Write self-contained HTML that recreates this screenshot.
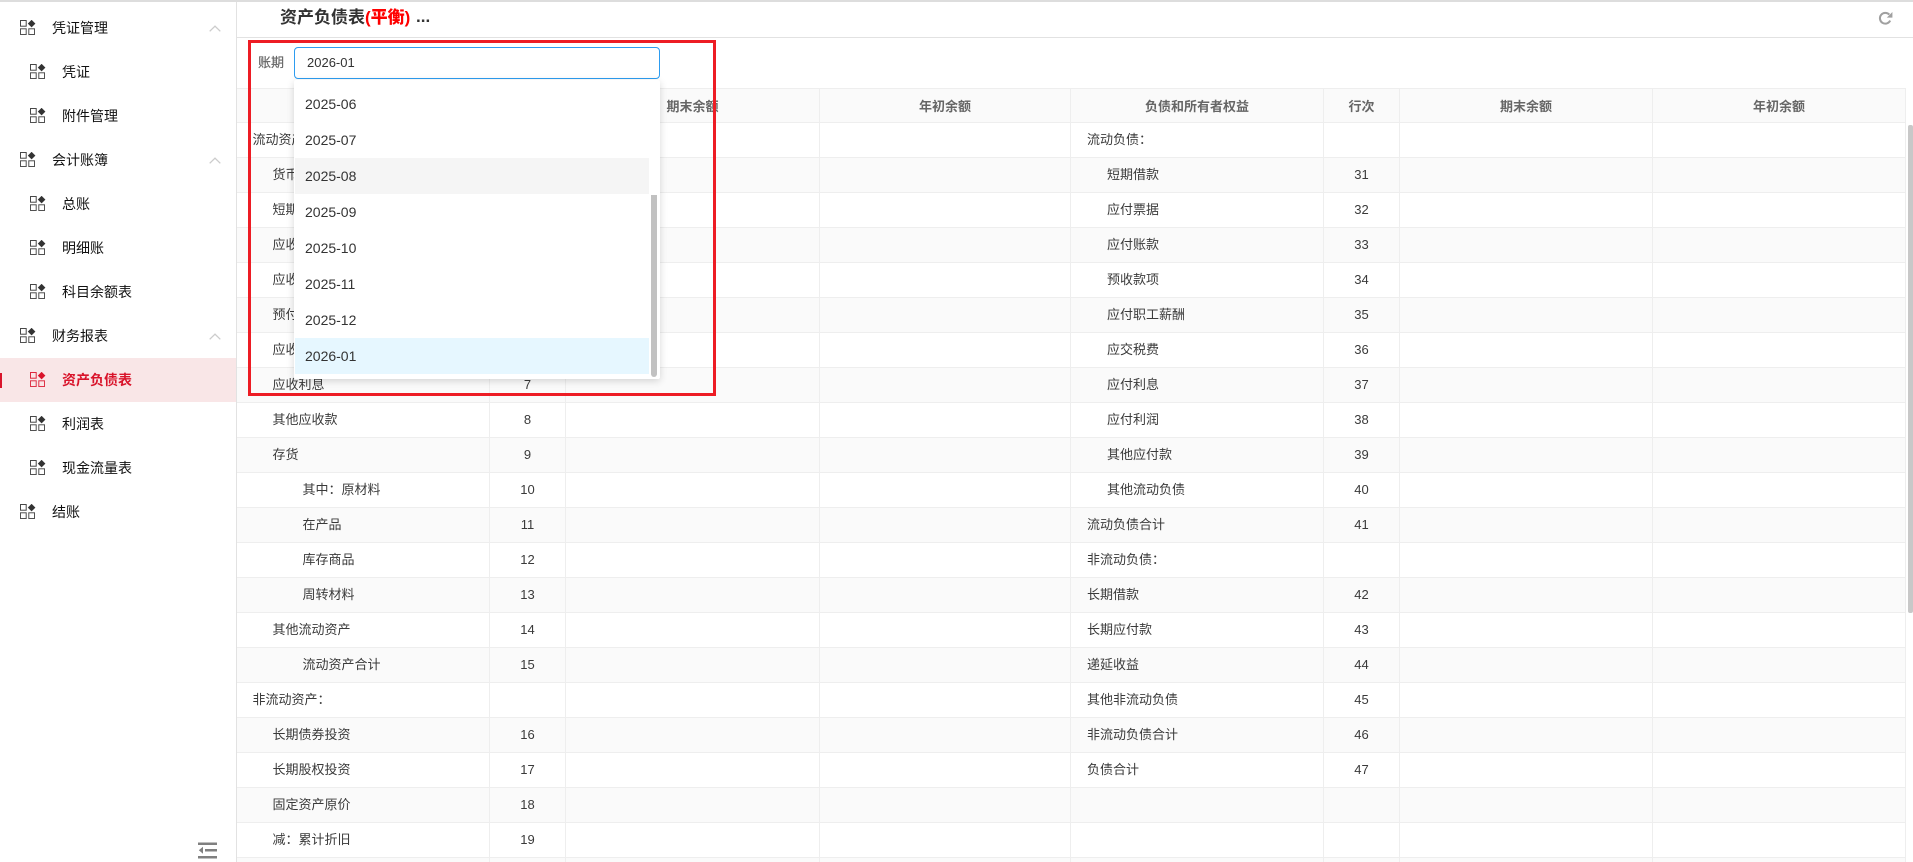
<!DOCTYPE html>
<html lang="zh"><head><meta charset="utf-8"><title>资产负债表</title>
<style>
*{box-sizing:border-box}
html,body{margin:0;padding:0;width:1913px;height:862px;overflow:hidden;background:#fff}
body{position:relative;font-family:"Liberation Sans","Noto Sans CJK SC",sans-serif;color:#333}
.abs{position:absolute}
#top{left:0;top:0;width:1913px;height:2px;background:#ddd}
#side{left:0;top:0;width:236px;height:862px;background:#fff}
#vline{left:236px;top:0;width:1px;height:862px;background:#e2e2e2}
.m{position:absolute;left:0;width:236px;height:44px;font-size:14px;line-height:44px;color:#111}
.m svg.i{position:absolute;top:14px;color:#333}
.m.t svg.i{left:20px}.m.s svg.i{left:30px}
.m span{position:absolute;top:0;white-space:nowrap}
.m.t span{left:52px}.m.s span{left:62px}
.m svg.c{position:absolute;left:209px;top:19px}
.m.act{background:#f9e6e7;color:#d9142b;font-weight:bold}
.m.act svg.i{color:#d9142b}
#bar{left:0;top:373px;width:2px;height:15px;background:#d9142b}
#hline{left:237px;top:37px;width:1676px;height:1px;background:#e2e2e2}
#title{left:280px;top:6px;font-size:17px;line-height:24px;font-weight:bold;color:#333;white-space:nowrap}
#title b{color:#f00}
#title i{font-style:normal;position:absolute;left:136px;top:-1px;font-size:17px}
#lab{left:258px;top:53px;font-size:13px;line-height:20px;color:#666;-webkit-text-stroke:.2px #666}
#inp{left:294px;top:47px;width:366px;height:32px;border:1px solid #2d9cf0;border-radius:4px;font-size:13px;line-height:30px;padding-left:12px;background:#fff;color:#333}
table{position:absolute;left:237px;top:88px;width:1669px;border-collapse:separate;border-spacing:0;table-layout:fixed;font-size:13px;color:#3a3a3a}
td,th{height:35px;padding:0;border-right:1px solid #eee;border-bottom:1px solid #eee;white-space:nowrap;overflow:hidden}
td{padding-bottom:4px}
td.n{padding-bottom:2px;text-align:center}
td:first-child{text-indent:-.5px}
th{background:#fafafa;color:#666;font-weight:bold;text-align:center;border-top:1px solid #eee}
tbody tr:nth-child(even) td{background:#fafafa}
.a{padding-left:16px}.b{padding-left:36px}.e{padding-left:66px}
#dd{left:294px;top:80px;width:366px;height:299px;background:#fff;box-shadow:0 2px 8px rgba(0,0,0,.16);border-radius:2px}
.o{position:absolute;left:1px;width:354px;height:36px;line-height:36px;font-size:14px;padding-left:10px;color:#333}
#sb{left:651px;top:195px;width:6px;height:182px;background:#c1c1c1;border-radius:0 0 3px 3px}
#box{left:248px;top:40px;width:468px;height:356px;border:3px solid #ed1c24}
#track{left:1906px;top:88px;width:7px;height:774px;background:#fff}
#thumb{left:1908px;top:125px;width:5px;height:488px;background:#c8c8c8;border-radius:2px}
</style></head><body>
<div class="abs" id="side">
<svg width="0" height="0" style="position:absolute"><defs>
<g id="ic"><rect x=".5" y=".5" width="5.7" height="5.7" fill="none" stroke="currentColor" stroke-opacity=".9"/><path d="M11.6-.2L15.4 3.6 11.6 7.4 7.8 3.6Z" fill="currentColor"/><rect x=".5" y="8.8" width="5.7" height="5.7" fill="none" stroke="currentColor" stroke-opacity=".85"/><rect x="8.8" y="8.8" width="5.7" height="5.7" fill="none" stroke="currentColor" stroke-opacity=".85"/></g>
<path id="ch" d="M.7 6.3L6 1.2 11.3 6.3" fill="none" stroke="#ccc" stroke-width="1.3"/>
</defs></svg>
<div class="m t" style="top:6px"><svg class="i" width="16" height="15"><use href="#ic"/></svg><span>凭证管理</span><svg class="c" width="12" height="8"><use href="#ch"/></svg></div>
<div class="m s" style="top:50px"><svg class="i" width="16" height="15"><use href="#ic"/></svg><span>凭证</span></div>
<div class="m s" style="top:94px"><svg class="i" width="16" height="15"><use href="#ic"/></svg><span>附件管理</span></div>
<div class="m t" style="top:138px"><svg class="i" width="16" height="15"><use href="#ic"/></svg><span>会计账簿</span><svg class="c" width="12" height="8"><use href="#ch"/></svg></div>
<div class="m s" style="top:182px"><svg class="i" width="16" height="15"><use href="#ic"/></svg><span>总账</span></div>
<div class="m s" style="top:226px"><svg class="i" width="16" height="15"><use href="#ic"/></svg><span>明细账</span></div>
<div class="m s" style="top:270px"><svg class="i" width="16" height="15"><use href="#ic"/></svg><span>科目余额表</span></div>
<div class="m t" style="top:314px"><svg class="i" width="16" height="15"><use href="#ic"/></svg><span>财务报表</span><svg class="c" width="12" height="8"><use href="#ch"/></svg></div>
<div class="m s act" style="top:358px"><svg class="i" width="16" height="15"><use href="#ic"/></svg><span>资产负债表</span></div>
<div class="m s" style="top:402px"><svg class="i" width="16" height="15"><use href="#ic"/></svg><span>利润表</span></div>
<div class="m s" style="top:446px"><svg class="i" width="16" height="15"><use href="#ic"/></svg><span>现金流量表</span></div>
<div class="m t" style="top:490px"><svg class="i" width="16" height="15"><use href="#ic"/></svg><span>结账</span></div>
<svg class="abs" style="left:198px;top:841px" width="20" height="19"><rect x="0" y="1.5" width="19" height="2.5" fill="#808080"/><rect x="7" y="8" width="12" height="2.5" fill="#808080"/><path d="M5 5.8V12.7L0.8 9.2Z" fill="#808080"/><rect x="0" y="15" width="19" height="2.5" fill="#808080"/></svg>
</div>
<div class="abs" id="bar"></div>
<div class="abs" id="vline"></div>
<div class="abs" id="top"></div>
<div class="abs" id="hline"></div>
<div class="abs" id="title">资产负债表<b>(平衡)</b><i>...</i></div>
<svg class="abs" style="left:1878px;top:11px" width="15" height="15" viewBox="0 0 15 15"><path d="M12.2 9.6A5.4 5.4 0 1 1 11.3 3.6" fill="none" stroke="#a0a0a0" stroke-width="2"/><path d="M14.4 1V6.6H8.8Z" fill="#a0a0a0"/></svg>
<div class="abs" id="lab">账期</div>
<div class="abs" id="inp">2026-01</div>
<table>
<colgroup><col style="width:253px"><col style="width:76px"><col style="width:254px"><col style="width:251px"><col style="width:253px"><col style="width:76px"><col style="width:253px"><col style="width:253px"></colgroup>
<thead><tr><th>资产</th><th>行次</th><th>期末余额</th><th>年初余额</th><th>负债和所有者权益</th><th>行次</th><th>期末余额</th><th>年初余额</th></tr></thead>
<tbody>
<tr><td class="a">流动资产：</td><td class="n"></td><td></td><td></td><td class="a">流动负债：</td><td class="n"></td><td></td><td></td></tr>
<tr><td class="b">货币资金</td><td class="n">1</td><td></td><td></td><td class="b">短期借款</td><td class="n">31</td><td></td><td></td></tr>
<tr><td class="b">短期投资</td><td class="n">2</td><td></td><td></td><td class="b">应付票据</td><td class="n">32</td><td></td><td></td></tr>
<tr><td class="b">应收票据</td><td class="n">3</td><td></td><td></td><td class="b">应付账款</td><td class="n">33</td><td></td><td></td></tr>
<tr><td class="b">应收账款</td><td class="n">4</td><td></td><td></td><td class="b">预收款项</td><td class="n">34</td><td></td><td></td></tr>
<tr><td class="b">预付账款</td><td class="n">5</td><td></td><td></td><td class="b">应付职工薪酬</td><td class="n">35</td><td></td><td></td></tr>
<tr><td class="b">应收股利</td><td class="n">6</td><td></td><td></td><td class="b">应交税费</td><td class="n">36</td><td></td><td></td></tr>
<tr><td class="b">应收利息</td><td class="n">7</td><td></td><td></td><td class="b">应付利息</td><td class="n">37</td><td></td><td></td></tr>
<tr><td class="b">其他应收款</td><td class="n">8</td><td></td><td></td><td class="b">应付利润</td><td class="n">38</td><td></td><td></td></tr>
<tr><td class="b">存货</td><td class="n">9</td><td></td><td></td><td class="b">其他应付款</td><td class="n">39</td><td></td><td></td></tr>
<tr><td class="e">其中：原材料</td><td class="n">10</td><td></td><td></td><td class="b">其他流动负债</td><td class="n">40</td><td></td><td></td></tr>
<tr><td class="e">在产品</td><td class="n">11</td><td></td><td></td><td class="a">流动负债合计</td><td class="n">41</td><td></td><td></td></tr>
<tr><td class="e">库存商品</td><td class="n">12</td><td></td><td></td><td class="a">非流动负债：</td><td class="n"></td><td></td><td></td></tr>
<tr><td class="e">周转材料</td><td class="n">13</td><td></td><td></td><td class="a">长期借款</td><td class="n">42</td><td></td><td></td></tr>
<tr><td class="b">其他流动资产</td><td class="n">14</td><td></td><td></td><td class="a">长期应付款</td><td class="n">43</td><td></td><td></td></tr>
<tr><td class="e">流动资产合计</td><td class="n">15</td><td></td><td></td><td class="a">递延收益</td><td class="n">44</td><td></td><td></td></tr>
<tr><td class="a">非流动资产：</td><td class="n"></td><td></td><td></td><td class="a">其他非流动负债</td><td class="n">45</td><td></td><td></td></tr>
<tr><td class="b">长期债券投资</td><td class="n">16</td><td></td><td></td><td class="a">非流动负债合计</td><td class="n">46</td><td></td><td></td></tr>
<tr><td class="b">长期股权投资</td><td class="n">17</td><td></td><td></td><td class="a">负债合计</td><td class="n">47</td><td></td><td></td></tr>
<tr><td class="b">固定资产原价</td><td class="n">18</td><td></td><td></td><td class="a"></td><td class="n"></td><td></td><td></td></tr>
<tr><td class="b">减：累计折旧</td><td class="n">19</td><td></td><td></td><td class="a"></td><td class="n"></td><td></td><td></td></tr>
<tr><td class="b">&nbsp;</td><td class="n"></td><td></td><td></td><td class="a"></td><td class="n"></td><td></td><td></td></tr>
</tbody></table>
<div class="abs" id="track"></div>
<div class="abs" id="thumb"></div>
<div class="abs" id="dd">
<div class="o" style="top:6px">2025-06</div>
<div class="o" style="top:42px">2025-07</div>
<div class="o" style="top:78px;background:#f5f5f5">2025-08</div>
<div class="o" style="top:114px">2025-09</div>
<div class="o" style="top:150px">2025-10</div>
<div class="o" style="top:186px">2025-11</div>
<div class="o" style="top:222px">2025-12</div>
<div class="o" style="top:258px;background:#e6f7ff">2026-01</div>
</div>
<div class="abs" id="sb"></div>
<div class="abs" id="box"></div>
</body></html>
